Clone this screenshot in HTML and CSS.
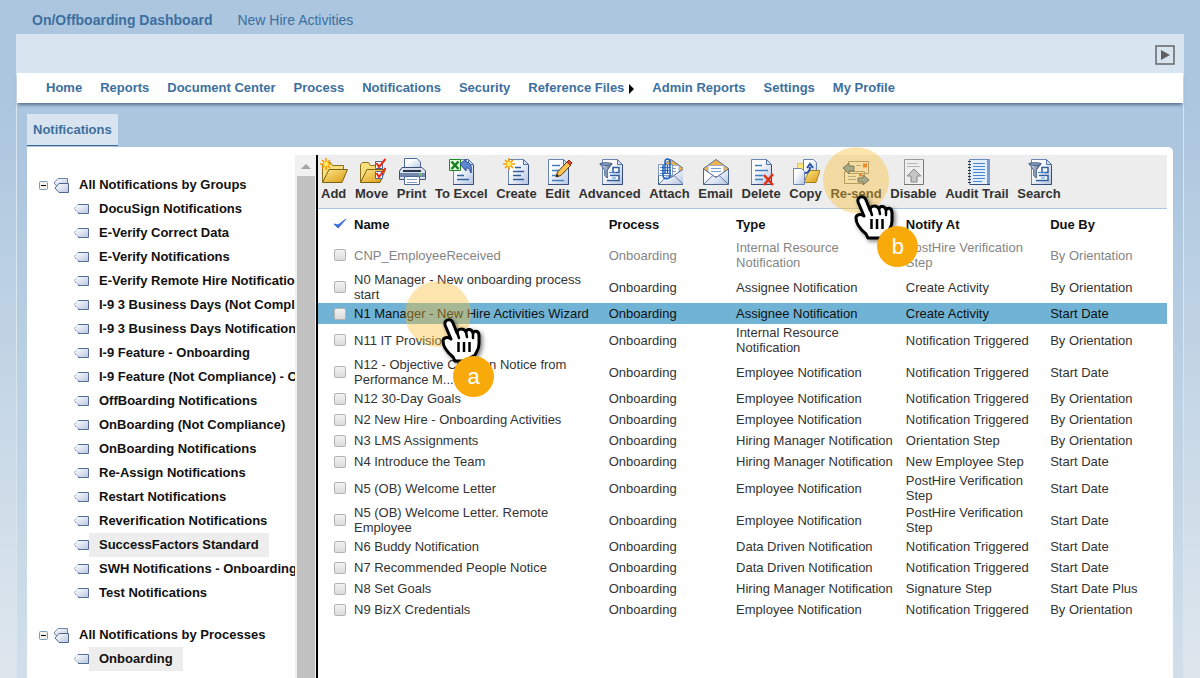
FILE: index.html
```html
<!DOCTYPE html>
<html lang="en">
<head>
    <meta charset="UTF-8">
    <title>On/Offboarding Dashboard</title>
    <link rel="stylesheet" href="styles.css">
</head>
<body>
<svg class="sprite" width="0" height="0" aria-hidden="true">
    <defs>
        <linearGradient id="paper" x1="0" y1="0" x2="1" y2="1">
            <stop offset="0.3" stop-color="#fff"/><stop offset="1" stop-color="#b3c3e2"/>
        </linearGradient>
        <linearGradient id="gold" x1="0" y1="0" x2="1" y2="1">
            <stop offset="0" stop-color="#ffe98c"/><stop offset="1" stop-color="#d99a13"/>
        </linearGradient>
        <linearGradient id="steel" x1="0" y1="0" x2="1" y2="0">
            <stop offset="0" stop-color="#e8eef6"/><stop offset="1" stop-color="#4a638e"/>
        </linearGradient>
        <linearGradient id="tagFill" x1="0" y1="0" x2="1" y2="1">
            <stop offset="0" stop-color="#fff"/><stop offset="1" stop-color="#b9c6df"/>
        </linearGradient>
    </defs>
    <symbol id="doc" viewBox="0 0 28 28">
        <path d="M6.500 1.500H21.500L26.500 6.500V26.500H6.500z" fill="url(#paper)" stroke="#6c86b4"/>
        <path d="M26.500 7V26.500H6" fill="none" stroke="#354d7c"/>
        <path d="M21.500 1.500V6.500H26.500z" fill="#d7e2f3" stroke="#5573a8"/>
    </symbol>
    <symbol id="sun" viewBox="0 0 12 12">
        <path d="M6 0V12M0 6H12M2 2L10 10M10 2L2 10" stroke="#f79a00" stroke-width="1.600"/>
        <circle cx="6" cy="6" r="2.500" fill="#fff36a" stroke="#ffbd1f"/>
    </symbol>
    <symbol id="folder" viewBox="0 0 28 28">
        <path d="M2.500 24V6.500L4.500 4.500H10.500L12.500 7.500H23.500V12" fill="#f8df7c" stroke="#8a701d"/>
        <path d="M2.500 24.500L9 11.500H27.500L22 24.500z" fill="url(#gold)" stroke="#7c6012"/>
    </symbol>
    <symbol id="funnel" viewBox="0 0 16 20">
        <path d="M1 1.500H15L9.500 9V18L6.500 15V9z" fill="url(#steel)" stroke="#38527d"/>
        <ellipse cx="8" cy="2" rx="7" ry="1.500" fill="#8ba3c7" stroke="#38527d"/>
    </symbol>
    <symbol id="add" viewBox="0 0 28 28">
        <use href="#folder"/><use href="#sun" width="12" height="12"/>
    </symbol>
    <symbol id="move" viewBox="0 0 28 28">
        <use href="#folder"/>
        <path d="M17.500 3.500h7v7h-7zM17.500 13.500h7v7h-7z" fill="#fff" stroke="#4669a4"/>
        <path d="M18.500 5l2.500 4 6.500-8M18.500 15l2.500 4 6.500-9" fill="none" stroke="#f32613" stroke-width="2"/>
    </symbol>
    <symbol id="print" viewBox="0 0 28 28">
        <path d="M6.500 11V.500H19L22.500 4V11" fill="url(#paper)" stroke="#526c9b"/>
        <path d="M4 9.500H24L27.500 13V21.500H1.500V13z" fill="#dbe2ed" stroke="#3c5073"/>
        <path d="M2 15h25v4H2z" fill="#7388ac"/><path d="M5 13h18" stroke="#27364f" stroke-width="2"/>
        <path d="M21 16.500h3" stroke="#66d93f" stroke-width="2"/>
        <path d="M6.500 18.500h15v8h-15z" fill="#fff" stroke="#4e6996"/>
        <path d="M9 21.500h10M9 24.500h10" stroke="#849bc2"/>
    </symbol>
    <symbol id="excel" viewBox="0 0 28 28">
        <use href="#doc"/><path d="M10 17.500h7M10 21.500h12" stroke="#34649e" stroke-width="1.500"/>
        <path d="M2.500 1.500h11v11h-11z" fill="#e4f8df" stroke="#1c8a24"/>
        <path d="M4.500 3.500l7 7.500M11.500 3.500l-7 7.500" stroke="#168020" stroke-width="2.500"/>
        <path d="M13 6l6-5v3c5 0 6 5 5 11-2-5-3-5-5-5v3z" fill="#5d87cf" stroke="#284c92"/>
    </symbol>
    <symbol id="create" viewBox="0 0 28 28">
        <use href="#doc"/><path d="M13 9.500h6M11 13.500h11M11 17.500h8M11 21.500h11" stroke="#315f9b" stroke-width="1.500"/>
        <use href="#sun" x="1" y="0" width="12" height="12"/>
    </symbol>
    <symbol id="edit" viewBox="0 0 28 28">
        <use href="#doc" x="-2"/><path d="M8 7.500h8M8 12.500h7M8 17.500h5M8 22.500h12" stroke="#4380bb" stroke-width="1.500"/>
        <path d="M12 19l1.500-5L23 4l4 3-10 10.500z" fill="#ffc250" stroke="#4a3a20"/>
        <path d="M23 4l2-2 3 3-2 2z" fill="#e34128" stroke="#912916"/><path d="M12 19l1-3 2 2z" fill="#222"/>
    </symbol>
    <symbol id="advanced" viewBox="0 0 28 28">
        <use href="#doc"/><path d="M17 9.500h6v5h-6zM14 17.500h9v5H11" fill="#fff" stroke="#315f9b" stroke-width="1.500"/>
        <path d="M13 14.500h7M16 20h4" stroke="#3b8de0"/>
        <use href="#funnel" x="3" y="4" width="14" height="18"/>
    </symbol>
    <symbol id="letter" viewBox="0 0 28 28">
        <path d="M1.500 10.500L14 1.500 26.500 10.500V26.500H1.500z" fill="#f3b44d" stroke="#557099"/>
        <path d="M6 7.500h16v11H6z" fill="#fff" stroke="#a0adc4"/>
        <path d="M9 10.500h10M9 13.500h10" stroke="#7c9bce"/>
        <path d="M1.500 11L14 19.500 26.500 11V26.500H1.500z" fill="url(#paper)" stroke="#4b648e"/>
        <path d="M2 26L11 17.500M26 26L17 17.500" stroke="#617aa3"/>
    </symbol>
    <symbol id="attach" viewBox="0 0 28 28">
        <use href="#letter" x="2"/><path d="M3.500 6.500h14v11h-14z" fill="#fff" stroke="#7e95be"/><path d="M5 9.500h11M5 12.500h11M5 15.500h11" stroke="#6384bf"/>
        <path d="M8 7v10c0 5 7 5 7 0V4c0-4-5-4-5 0v12" fill="none" stroke="#1660c3" stroke-width="1.500"/>
        <path d="M12.500 7v9" stroke="#1660c3" stroke-width="1.500"/>
    </symbol>
    <symbol id="delete" viewBox="0 0 28 28">
        <use href="#doc" x="-2"/><path d="M8 7.500h7M8 12.500h13M8 17.500h8M8 21.500h8" stroke="#4380bb" stroke-width="1.500"/>
        <path d="M17 17l9 10M26 16L17 27" stroke="#e23112" stroke-width="2.500"/>
    </symbol>
    <symbol id="copy" viewBox="0 0 28 28">
        <path d="M5.500 5.500h9v10h-9z" fill="#ffe879" stroke="#d9c069"/>
        <path d="M11.500 1.500h10l3 3v16h-13z" fill="url(#paper)" stroke="#6e86af"/>
        <path d="M12 24.500L17 12.500H28L24 24.500z" fill="url(#gold)" stroke="#a88018"/>
        <path d="M1.500 10.500h8l3 3v13h-11z" fill="url(#paper)" stroke="#6e86af"/>
        <path d="M13 15c4 0 5-3 5-6M15 10l3-4 3 4" fill="none" stroke="#2853a5" stroke-width="2"/>
    </symbol>
    <symbol id="resend" viewBox="0 0 28 28">
        <path d="M6.500 3.500h20v12h-20zM2.500 13.500h20v12h-20z" fill="#f3f3ee" stroke="#8c8b80"/>
        <path d="M21 5.500h4v4h-4zM17 15.500h3v3h-3z" fill="#e96822"/>
        <path d="M14 7.500h5M6 18.500h8M6 21.500h8" stroke="#85a3ba"/>
        <path d="M1 10l6-5v3h5v5H7v3zM27 22l-6-5v3h-5v4h5v3z" fill="#6f9cc4" stroke="#2c4a6c"/>
    </symbol>
    <symbol id="disable" viewBox="0 0 28 28">
        <path d="M5.500 1.500h19v25h-19z" fill="#eee" stroke="#999"/><path d="M24.500 2v24.500H5" fill="none" stroke="#777"/>
        <path d="M8 5.500h11M8 8.500h13" stroke="#b6b6b6"/>
        <path d="M15 11l7 7h-4v6h-6v-6H8z" fill="#c5c5c5" stroke="#888"/>
    </symbol>
    <symbol id="audit" viewBox="0 0 28 28">
        <path d="M6.500 1.500h20v25h-20z" fill="#e3effd" stroke="#6b8cc0"/>
        <path d="M24 2h3v25h-3z" fill="#7d9bd0"/><path d="M7 26.500h20" stroke="#345382"/>
        <path d="M10 5.500h12M10 8.500h12M10 11.500h12M10 14.500h12M10 17.500h12M10 20.500h12M10 23.500h9" stroke="#4a86d0"/>
        <path d="M6.500 3v23" stroke="#27364f" stroke-width="3" stroke-dasharray="1 2"/>
    </symbol>
    <symbol id="tag" viewBox="0 0 16 10">
        <path d="M5 1H15.500V9.500H5L1 5z" fill="url(#tagFill)"/>
        <path d="M6 9L1 5 5 .5H15" fill="none" stroke="#7184ab" stroke-dasharray="1 1"/>
        <path d="M5 .5H15.500V9.500H5" fill="none" stroke="#566d98"/>
    </symbol>
    <symbol id="tags" viewBox="0 0 16 15">
        <path d="M5 .5H14.500V9.500H5L1 5z" fill="url(#tagFill)" stroke="#7083aa"/>
        <path d="M6 5.500H15.500V14.500H6L2 10z" fill="url(#tagFill)" stroke="#506690"/>
    </symbol>
    <symbol id="minus" viewBox="0 0 9 9">
        <rect x=".5" y=".5" width="8" height="8" rx="1" fill="#f2f0e8" stroke="#789cbf"/><path d="M2 4.500h5" stroke="#000"/>
    </symbol>
    <symbol id="hand" viewBox="0 0 40 46">
        <path d="M4 7C3 1 10 0 12 5l4 10c0-5 7-5 9-1 1-4 6-3 7 1 2-3 6-2 6 3v8c0 6-3 8-4 11l-5 3-1 3H14l-2-4C6 34 2 28 2 23c0-3 4-5 8-2z" fill="#fff" stroke="#000" stroke-width="3" stroke-linejoin="round"/>
        <path d="M16 14l2 6M25 14l1 5M32 15v5" stroke="#000" stroke-width="2.500" stroke-linecap="round"/>
        <path d="M17.500 24v10M23 24v10M28.500 24v10" stroke="#000" stroke-width="2.500"/>
    </symbol>
</svg>

<div class="top-tabs">
    <a class="current" href="#">On/Offboarding Dashboard</a>
    <a href="#">New Hire Activities</a>
</div>
<div class="frame">
    <div class="band">
        <button class="play" type="button" aria-label="Expand">
            <svg width="20" height="20" viewBox="0 0 20 20"><path d="M1 1h18v18H1z" fill="none" stroke="#666" stroke-width="1.500"/><path d="M6 5l9 5-9 5z" fill="#606060"/></svg>
        </button>
    </div>
    <nav class="menu">
        <a href="#">Home</a>
        <a href="#">Reports</a>
        <a href="#">Document Center</a>
        <a href="#">Process</a>
        <a href="#">Notifications</a>
        <a href="#">Security</a>
        <a class="has-sub" href="#">Reference Files</a>
        <a href="#">Admin Reports</a>
        <a href="#">Settings</a>
        <a href="#">My Profile</a>
    </nav>
    <div class="sub-tabs"><a href="#">Notifications</a></div>
    <div class="panel">
        <div class="side">
            <div class="tree">
                <div class="group">
                    <div class="group-title"><svg class="toggle"><use href="#minus"/></svg><svg class="tags"><use href="#tags"/></svg><a href="#">All Notifications by Groups</a></div>
                    <ul>
                        <li><svg class="tag"><use href="#tag"/></svg><a href="#">DocuSign Notifications</a></li>
                        <li><svg class="tag"><use href="#tag"/></svg><a href="#">E-Verify Correct Data</a></li>
                        <li><svg class="tag"><use href="#tag"/></svg><a href="#">E-Verify Notifications</a></li>
                        <li><svg class="tag"><use href="#tag"/></svg><a href="#">E-Verify Remote Hire Notifications</a></li>
                        <li><svg class="tag"><use href="#tag"/></svg><a href="#">I-9 3 Business Days (Not Compliance)</a></li>
                        <li><svg class="tag"><use href="#tag"/></svg><a href="#">I-9 3 Business Days Notifications</a></li>
                        <li><svg class="tag"><use href="#tag"/></svg><a href="#">I-9 Feature - Onboarding</a></li>
                        <li><svg class="tag"><use href="#tag"/></svg><a href="#">I-9 Feature (Not Compliance) - Onboarding</a></li>
                        <li><svg class="tag"><use href="#tag"/></svg><a href="#">OffBoarding Notifications</a></li>
                        <li><svg class="tag"><use href="#tag"/></svg><a href="#">OnBoarding (Not Compliance)</a></li>
                        <li><svg class="tag"><use href="#tag"/></svg><a href="#">OnBoarding Notifications</a></li>
                        <li><svg class="tag"><use href="#tag"/></svg><a href="#">Re-Assign Notifications</a></li>
                        <li><svg class="tag"><use href="#tag"/></svg><a href="#">Restart Notifications</a></li>
                        <li><svg class="tag"><use href="#tag"/></svg><a href="#">Reverification Notifications</a></li>
                        <li><svg class="tag"><use href="#tag"/></svg><a class="selected" href="#">SuccessFactors Standard</a></li>
                        <li><svg class="tag"><use href="#tag"/></svg><a href="#">SWH Notifications - Onboarding</a></li>
                        <li><svg class="tag"><use href="#tag"/></svg><a href="#">Test Notifications</a></li>
                    </ul>
                </div>
                <div class="group">
                    <div class="group-title"><svg class="toggle"><use href="#minus"/></svg><svg class="tags"><use href="#tags"/></svg><a href="#">All Notifications by Processes</a></div>
                    <ul>
                        <li><svg class="tag"><use href="#tag"/></svg><a class="selected" href="#">Onboarding</a></li>
                        <li><svg class="tag"><use href="#tag"/></svg><a href="#">I-9 3 Business Days</a></li>
                    </ul>
                </div>
            </div>
            <div class="scrollbar"><span class="arrow-up"></span><span class="thumb"></span></div>
        </div>
        <div class="main">
            <div class="toolbar">
                <button type="button"><svg><use href="#add"/></svg>Add</button>
                <button type="button"><svg><use href="#move"/></svg>Move</button>
                <button type="button"><svg><use href="#print"/></svg>Print</button>
                <button type="button"><svg><use href="#excel"/></svg>To Excel</button>
                <button type="button"><svg><use href="#create"/></svg>Create</button>
                <button type="button"><svg><use href="#edit"/></svg>Edit</button>
                <button type="button"><svg><use href="#advanced"/></svg>Advanced</button>
                <button type="button"><svg><use href="#attach"/></svg>Attach</button>
                <button type="button"><svg><use href="#letter"/></svg>Email</button>
                <button type="button"><svg><use href="#delete"/></svg>Delete</button>
                <button type="button"><svg><use href="#copy"/></svg>Copy</button>
                <div class="step step-b">
                    <button type="button"><svg><use href="#resend"/></svg>Re-send</button>
                    <span class="spot"></span><svg class="hand"><use href="#hand"/></svg><span class="badge">b</span>
                </div>
                <button type="button"><svg><use href="#disable"/></svg>Disable</button>
                <button type="button"><svg><use href="#audit"/></svg>Audit Trail</button>
                <button type="button"><svg><use href="#advanced"/></svg>Search</button>
            </div>
            <table>
                <colgroup>
                    <col class="col-check"><col class="col-name"><col class="col-process"><col class="col-type"><col class="col-notify"><col>
                </colgroup>
                <thead>
                <tr>
                    <th><svg class="check" viewBox="0 0 14 12"><path d="M1 6l4 4L13 1 5 7z" fill="#3c6fd6" stroke="#3c6fd6"/></svg></th>
                    <th>Name</th><th>Process</th><th>Type</th><th>Notify At</th><th>Due By</th>
                </tr>
                </thead>
                <tbody>
                <tr class="off"><td><input type="checkbox" aria-label="CNP_EmployeeReceived"></td><td>CNP_EmployeeReceived</td><td>Onboarding</td><td>Internal Resource Notification</td><td>PostHire Verification Step</td><td>By Orientation</td></tr>
                <tr><td><input type="checkbox" aria-label="N0 Manager"></td><td>N0 Manager - New onboarding process start</td><td>Onboarding</td><td>Assignee Notification</td><td>Create Activity</td><td>By Orientation</td></tr>
                <tr class="active"><td><input type="checkbox" aria-label="N1 Manager"></td><td class="step step-a">N1 Manager - New Hire Activities Wizard<span class="spot"></span><svg class="hand"><use href="#hand"/></svg><span class="badge">a</span></td><td>Onboarding</td><td>Assignee Notification</td><td>Create Activity</td><td>Start Date</td></tr>
                <tr><td><input type="checkbox" aria-label="N11 IT Provisioning"></td><td>N11 IT Provisioning</td><td>Onboarding</td><td>Internal Resource Notification</td><td>Notification Triggered</td><td>By Orientation</td></tr>
                <tr><td><input type="checkbox" aria-label="N12 Objective Creation"></td><td>N12 - Objective Creation Notice from Performance M...</td><td>Onboarding</td><td>Employee Notification</td><td>Notification Triggered</td><td>Start Date</td></tr>
                <tr><td><input type="checkbox" aria-label="N12 30-Day Goals"></td><td>N12 30-Day Goals</td><td>Onboarding</td><td>Employee Notification</td><td>Notification Triggered</td><td>By Orientation</td></tr>
                <tr><td><input type="checkbox" aria-label="N2 New Hire"></td><td>N2 New Hire - Onboarding Activities</td><td>Onboarding</td><td>Employee Notification</td><td>Notification Triggered</td><td>By Orientation</td></tr>
                <tr><td><input type="checkbox" aria-label="N3 LMS Assignments"></td><td>N3 LMS Assignments</td><td>Onboarding</td><td>Hiring Manager Notification</td><td>Orientation Step</td><td>By Orientation</td></tr>
                <tr><td><input type="checkbox" aria-label="N4 Introduce the Team"></td><td>N4 Introduce the Team</td><td>Onboarding</td><td>Hiring Manager Notification</td><td>New Employee Step</td><td>Start Date</td></tr>
                <tr><td><input type="checkbox" aria-label="N5 Welcome Letter"></td><td>N5 (OB) Welcome Letter</td><td>Onboarding</td><td>Employee Notification</td><td>PostHire Verification Step</td><td>Start Date</td></tr>
                <tr><td><input type="checkbox" aria-label="N5 Welcome Letter, Remote"></td><td>N5 (OB) Welcome Letter. Remote Employee</td><td>Onboarding</td><td>Employee Notification</td><td>PostHire Verification Step</td><td>Start Date</td></tr>
                <tr><td><input type="checkbox" aria-label="N6 Buddy Notification"></td><td>N6 Buddy Notification</td><td>Onboarding</td><td>Data Driven Notification</td><td>Notification Triggered</td><td>Start Date</td></tr>
                <tr><td><input type="checkbox" aria-label="N7 Recommended People"></td><td>N7 Recommended People Notice</td><td>Onboarding</td><td>Data Driven Notification</td><td>Notification Triggered</td><td>Start Date</td></tr>
                <tr><td><input type="checkbox" aria-label="N8 Set Goals"></td><td>N8 Set Goals</td><td>Onboarding</td><td>Hiring Manager Notification</td><td>Signature Step</td><td>Start Date Plus</td></tr>
                <tr><td><input type="checkbox" aria-label="N9 BizX Credentials"></td><td>N9 BizX Credentials</td><td>Onboarding</td><td>Employee Notification</td><td>Notification Triggered</td><td>By Orientation</td></tr>
                </tbody>
            </table>
        </div>
    </div>
</div>
</body>
</html>
```

FILE: styles.css
```css
*{
    margin: 0;
    padding: 0;
    box-sizing: border-box;
}
body{
    height: 100vh;
    overflow: hidden;
    display: flex;
    flex-direction: column;
    font: 13px/15px "Liberation Sans", Arial, sans-serif;
    color: #333;
    background: linear-gradient(#abc6de 0, #abc6de 15%, #dfe7ee 100%);
}
a{
    color: inherit;
    text-decoration: none;
}
ul{
    list-style: none;
}
button{
    font: inherit;
    color: inherit;
    border: 0;
    background: none;
    cursor: pointer;
}
.sprite{
    position: absolute;
}
.top-tabs{
    display: flex;
    gap: 25px;
    padding: 6px 32px 0;
    height: 34px;
    line-height: 28px;
    font-size: 14px;
    color: #3d6f9e;
}
.top-tabs .current{
    font-weight: bold;
}
.frame{
    flex: 1;
    min-height: 0;
    margin: 0 16px;
    border: 1px solid #d9e5ef;
    border-width: 0 1px;
    display: flex;
    flex-direction: column;
    background: linear-gradient(#abc6de 0, #abc6de 20%, #d1dfea 100%);
}
.band{
    height: 39px;
    padding: 2px 8px 0;
    display: flex;
    justify-content: flex-end;
    align-items: center;
    background: #d8e4ef;
}
.play{
    width: 20px;
    height: 20px;
}
.play svg{
    display: block;
}
.menu{
    display: flex;
    gap: 18px;
    height: 30px;
    padding: 0 29px;
    line-height: 29px;
    font-weight: bold;
    color: #3d6f9e;
    background: #fff;
    box-shadow: 0 3px 3px -1px rgba(50,80,110,0.7);
}
.menu .has-sub::after{
    content: "";
    display: inline-block;
    vertical-align: middle;
    margin-left: 5px;
    border: 5px solid transparent;
    border-left-color: #000;
    border-right: 0;
}
.sub-tabs{
    display: flex;
    padding: 11px 10px 1px;
}
.sub-tabs a{
    height: 32px;
    padding: 0 6px;
    line-height: 31px;
    font-weight: bold;
    color: #3d6f9e;
    background: #d8e4ef;
    border-bottom: 1px solid #336795;
}
.panel{
    flex: 1;
    min-height: 0;
    display: flex;
    margin: 0 10px;
    padding: 8px 6px 0 0;
    background: #fff;
    border-radius: 0 5px 0 0;
}
.side{
    flex: none;
    width: 291px;
    display: flex;
    border-right: 2px solid #000;
}
.tree{
    flex: 1;
    min-width: 0;
    overflow: hidden;
    padding: 18px 0 0 12px;
    font-weight: bold;
    line-height: 24px;
    white-space: nowrap;
    color: #111;
}
.group{
    margin-bottom: 18px;
}
.group-title,
.tree li{
    display: flex;
    align-items: center;
    height: 24px;
}
.tree li{
    padding-left: 34px;
}
.tree svg{
    flex: none;
}
.toggle{
    width: 9px;
    height: 9px;
    margin-right: 5px;
}
.tags{
    width: 16px;
    height: 15px;
}
.tag{
    width: 16px;
    height: 10px;
}
.tree a{
    padding: 0 10px;
}
.tree .selected{
    background: #ededed;
}
.scrollbar{
    width: 21px;
    padding: 0 1px 0 2px;
    display: flex;
    flex-direction: column;
    align-items: center;
    background: #f1f1f1;
}
.arrow-up{
    margin: 9px 0 7px;
    border: 5px solid transparent;
    border-top: 0;
    border-bottom-color: #a3a3a3;
}
.thumb{
    flex: 1;
    width: 100%;
    background: #c1c1c1;
}
.main{
    flex: 1;
    min-width: 0;
}
.toolbar{
    display: flex;
    justify-content: space-between;
    height: 54px;
    padding: 3px 12.5% 0 3px;
    background: #ededed;
    border-bottom: 1px solid #a9c6e0;
}
.toolbar button{
    display: flex;
    flex-direction: column;
    align-items: center;
    font-weight: bold;
    white-space: nowrap;
}
.toolbar button svg{
    width: 28px;
    height: 28px;
    margin: 0 -2px;
}
table{
    width: 100%;
    table-layout: fixed;
    border-collapse: collapse;
}
.col-check{
    width: 36px;
}
.col-name{
    width: 30%;
}
.col-process{
    width: 15%;
}
.col-type{
    width: 20%;
}
.col-notify{
    width: 17%;
}
th{
    height: 30px;
    text-align: left;
    color: #111;
}
td{
    height: 21px;
    padding: 1px 12px 1px 0;
    vertical-align: middle;
}
td:nth-child(4){
    padding-right: 8px;
}
th:first-child,
td:first-child{
    padding: 0 0 0 16px;
}
.check{
    display: block;
    width: 14px;
    height: 12px;
    margin-left: -1px;
}
td input{
    appearance: none;
    display: block;
    width: 12px;
    height: 12px;
    border: 1px solid #b4b4b4;
    border-radius: 2px;
    background: linear-gradient(#f2f2f2, #dcdcdc);
}
.off{
    color: #858585;
}
.active{
    color: #111;
    background: #70b3d5;
}
/* walkthrough steps */
.step{
    position: relative;
}
.spot,
.hand,
.badge{
    position: absolute;
    pointer-events: none;
}
.spot{
    width: 66px;
    height: 66px;
    border-radius: 50%;
    background: rgba(250,190,50,0.4);
}
.hand{
    width: 40px;
    height: 46px;
    z-index: 1;
    filter: drop-shadow(2px 2px 2px rgba(0,0,0,0.5));
}
.badge{
    width: 41px;
    height: 41px;
    border-radius: 50%;
    line-height: 41px;
    text-align: center;
    font-size: 22px;
    color: #fff;
    background: #f8aa0b;
    z-index: 2;
}
.step-a .spot{
    left: 51px;
    top: -22px;
}
.step-a .hand{
    left: 87px;
    top: 15px;
}
.step-a .badge{
    left: 99px;
    top: 53px;
}
.step-b .spot{
    left: -7px;
    top: -11px;
}
.step-b .hand{
    left: 24px;
    top: 37px;
}
.step-b .badge{
    left: 47px;
    top: 68px;
}
```
